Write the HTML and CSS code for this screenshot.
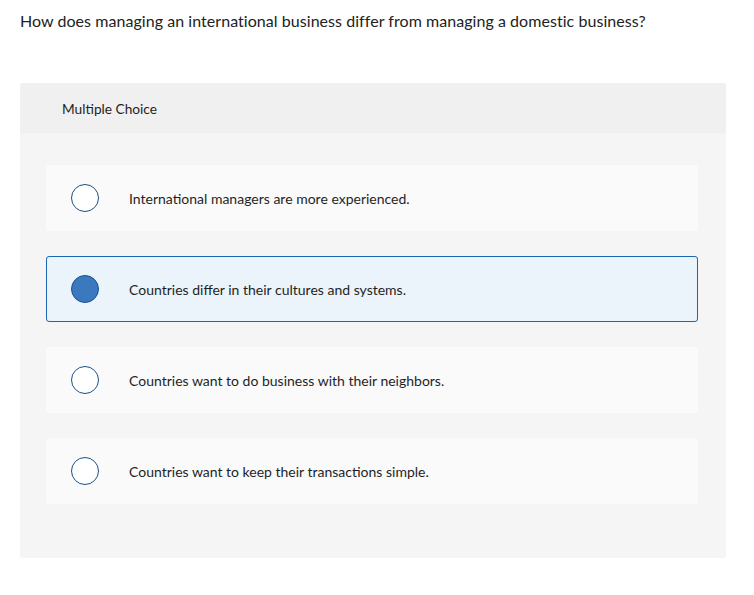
FILE: index.html
```html
<!DOCTYPE html>
<html>
<head>
<meta charset="utf-8">
<link rel="stylesheet" href="styles.css">
</head>
<body>
<div class="page">
  <p class="question">How does managing an international business differ from managing a domestic business?</p>
  <div class="panel">
    <div class="panel-head">Multiple Choice</div>
    <div class="panel-body">
      <div class="option"><span class="radio"></span><span class="label">International managers are more experienced.</span></div>
      <div class="option selected"><span class="radio"></span><span class="label">Countries differ in their cultures and systems.</span></div>
      <div class="option"><span class="radio"></span><span class="label">Countries want to do business with their neighbors.</span></div>
      <div class="option"><span class="radio"></span><span class="label">Countries want to keep their transactions simple.</span></div>
    </div>
  </div>
</div>
</body>
</html>
```
FILE: styles.css
```css
html, body { margin: 0; padding: 0; background: #fff; }
body { font-family: Lato, "Open Sans", "Liberation Sans", sans-serif; color: #1f1f1f; }
.page { padding: 11px 28px 0 20px; }
.question { margin: 0; font-size: 16px; line-height: 20px; letter-spacing: 0.05px; color: #222; }
.panel { margin-top: 52px; background: #f5f5f5; border-radius: 3px; overflow: hidden; height: 475px; }
.panel-head { background: #f0f0f0; height: 50px; padding-left: 42px; display: flex; align-items: center; font-size: 13.7px; color: #1f1f1f; }
.panel-body { padding: 32px 28px 0 26px; display: flex; flex-direction: column; gap: 25px; }
.option { height: 66px; box-sizing: border-box; background: #fafafa; border-radius: 3px; display: flex; align-items: center; padding-left: 25px; border: 1px solid transparent; }
.option.selected { background: #ebf3fb; border-color: #1d64b1; }
.radio { width: 28px; height: 28px; box-sizing: border-box; border-radius: 50%; border: 1.5px solid #1b4f8a; background: #fff; flex: none; margin-left: -1px; }
.option.selected .radio { background: #3b78c0; border-color: #1b5191; }
.label { margin-left: 30px; font-size: 14px; color: #1f1f1f; }
```
